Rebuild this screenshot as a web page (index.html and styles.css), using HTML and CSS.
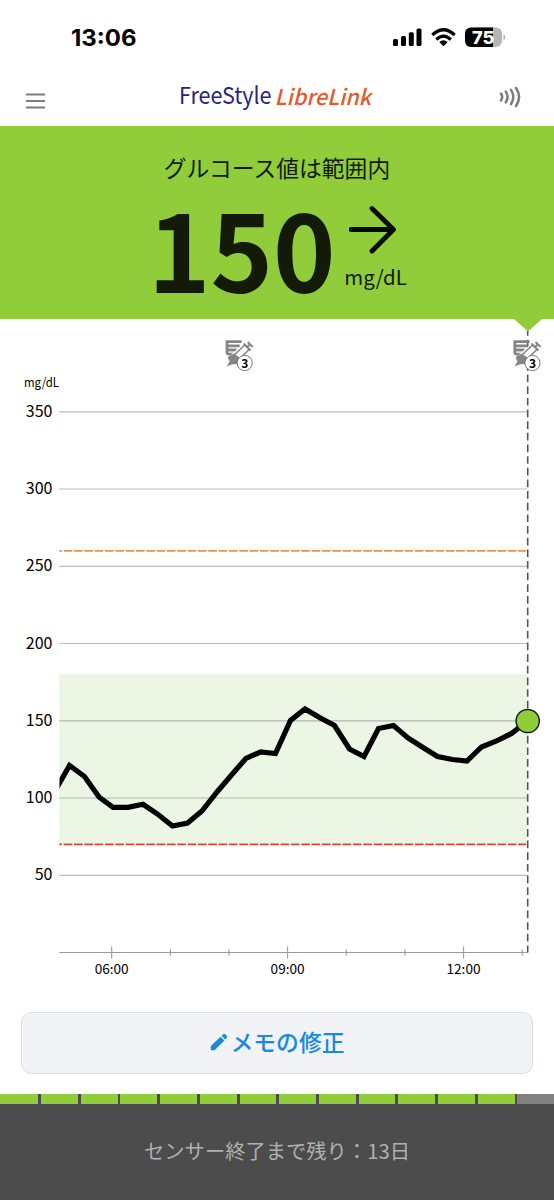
FILE: index.html
```html
<!DOCTYPE html>
<html lang="ja">
<head>
<meta charset="utf-8">
<title>FreeStyle LibreLink</title>
<link rel="stylesheet" href="styles.css">
</head>
<body>
<div class="status">
  <svg width="554" height="68" viewBox="0 0 554 68">
    <text class="clock" x="71" y="46" textLength="65.5" lengthAdjust="spacingAndGlyphs">13:06</text>
    <rect x="393" y="39" width="5" height="7" rx="1.5"/>
    <rect x="401" y="36" width="5" height="10" rx="1.5"/>
    <rect x="408.800" y="32.200" width="5" height="13.800" rx="1.500"/>
    <rect x="416.500" y="28.500" width="5" height="17.500" rx="1.500"/>
    <g class="wifi">
      <path d="M432.300 35Q443.500 24.500 454.700 35"/>
      <path d="M436.200 39.500Q443.500 32.800 450.800 39.500"/>
    </g>
    <path d="M439.300 42Q443.500 38.600 447.700 42L443.500 46.200Z"/>
    <clipPath id="cell"><rect x="465" y="27.500" width="37" height="19.500" rx="6"/></clipPath>
    <g clip-path="url(#cell)">
      <rect class="cell-empty" x="465" y="27" width="37" height="20"/>
      <rect x="465" y="27" width="28" height="20"/>
    </g>
    <path class="cell-empty" d="M503.500 34Q505.300 35 505.300 37.300T503.500 40.600Z"/>
    <text class="battery" x="472" y="43.500" textLength="22.500" lengthAdjust="spacingAndGlyphs">75</text>
  </svg>
</div>
<header class="header">
  <svg width="554" height="58" viewBox="0 68 554 58">
    <path class="menu" d="M26 94.500H45M26 101H45M26 107.500H45"/>
    <text class="logo blue" x="179" y="104.300" textLength="92.500" lengthAdjust="spacingAndGlyphs">FreeStyle</text>
    <text class="logo orange" x="274.500" y="104.500" textLength="96.500" lengthAdjust="spacingAndGlyphs">LibreLink</text>
    <path class="nfc" d="M501 93.500Q503.300 97 501 100.500M505.800 91.600Q509.400 97 505.800 102.400M511 89.800Q515.600 97 511 104.200M516 88Q522.200 97 516 106"/>
  </svg>
</header>
<section class="banner">
  <div class="banner-title">グルコース値は範囲内</div>
  <div class="reading">
    <div class="value">150</div>
    <div class="side">
      <svg class="trend" width="48" height="50" viewBox="0 0 48 50"><path d="M2 24.500H44M23 3.500L44.500 24.500L23 46"/></svg>
      <div class="unit">mg/dL</div>
    </div>
  </div>
</section>
<main>
  <svg class="chart" width="554" height="675" viewBox="0 319 554 675">
    <defs>
      <g id="note">
        <path class="paper" d="M16 1.200H1.300V12.500L2.500 13.700H9M2 5.300H14M2 9.500H11"/>
        <path class="halo" d="M6 19L21 6"/>
        <path class="gray" d="M5 14.500L9 13L15 18L16 24L9 23.500L6 24L1 26L4 21L2 17Z"/>
        <path class="barrel" d="M8.500 14.500L19 4.500L23.500 9L14 18Z"/>
        <path class="plunger" d="M21 7L24.500 3.500M22 1.500L27 6.500M18 3L25 10"/>
        <circle class="badge" cx="19" cy="22.500" r="7.600"/>
        <text class="count" x="19" y="27" text-anchor="middle">3</text>
      </g>
      <clipPath id="plot"><rect x="59.500" y="390" width="480" height="562"/></clipPath>
    </defs>
    <path class="green" d="M514 319H542L528 331.500Z"/>
    <rect class="range" x="59.300" y="674.500" width="468" height="170"/>
    <path class="grid" d="M59.300 411.800H527.500M59.300 489H527.500M59.300 566.300H527.500M59.300 643.500H527.500M59.300 720.800H527.500M59.300 798H527.500M59.300 875.300H527.500"/>
    <path class="axis" d="M59.300 952.500H527.500M111.700 946.500V958.500M287.600 946.500V958.500M463.600 946.500V958.500M170.400 949.500V955.500M229 949.500V955.500M346.300 949.500V955.500M405 949.500V955.500M522.300 949.500V955.500"/>
    <path class="limit high" d="M59.300 550.900H526"/>
    <path class="limit low" d="M59.300 844.400H526"/>
    <path class="now" d="M527.700 331V952.500"/>
    <polyline class="trace" clip-path="url(#plot)" points="55,791 69.500,765.500 84.500,776.500 99,797 113,807.300 128,807.300 143,804.300 157.500,814 172.500,826 187.500,823 202,811 217,792 231.500,775 246,758.300 260.500,752 275.500,753.500 290.500,720.500 305,709 319.500,717.500 334.500,725.500 349.500,749 364,756.500 378.500,728.500 393.500,725.500 408,738 423,747.500 437.500,756.500 452.500,759.500 467,761 481.500,747 496.500,741 511.500,733.500 527.500,721"/>
    <circle class="current" cx="527.700" cy="721" r="11.600"/>
    <g class="ylabels" text-anchor="end">
      <text x="52.500" y="416.700">350</text><text x="52.500" y="494">300</text><text x="52.500" y="571.200">250</text><text x="52.500" y="648.500">200</text><text x="52.500" y="725.700">150</text><text x="52.500" y="803">100</text><text x="52.500" y="880.200">50</text>
    </g>
    <text class="yunit" x="24" y="386.500" textLength="35" lengthAdjust="spacingAndGlyphs">mg/dL</text>
    <g class="xlabels" text-anchor="middle">
      <text x="111.700" y="973.500">06:00</text><text x="287.600" y="973.500">09:00</text><text x="463.500" y="973.500">12:00</text>
    </g>
    <use href="#note" x="225.700" y="340.500"/>
    <use href="#note" x="513.500" y="340.500"/>
  </svg>
  <button class="edit">
    <svg width="18" height="18" viewBox="0 0 18 18"><path d="M.8 17.200V13L10.600 3.700L14.400 7.500L4.600 17.200ZM11.600 2.800L13.300 1.200Q14.200 .5 15.100 1.200L16.700 2.800Q17.400 3.700 16.700 4.700L15.300 6.500Z"/></svg>
    <span>メモの修正</span>
  </button>
</main>
<footer class="footer">
  <div class="days">
    <i></i><i></i><i></i><i></i><i></i><i></i><i></i><i></i><i></i><i></i><i></i><i></i><i></i><i class="used"></i>
  </div>
  <div class="remaining">センサー終了まで残り：13日</div>
</footer>
</body>
</html>
```

FILE: styles.css
```css
body {
  margin: 0;
  width: 554px;
  height: 1200px;
  display: flex;
  flex-direction: column;
  background: #fff;
  color: #111;
  font-family: "Noto Sans CJK JP", sans-serif;
  overflow: hidden;
}
svg { display: block; flex: none; }
.status { height: 68px; }
.clock { font: 700 22.5px Inter, sans-serif; }
.wifi { fill: none; stroke: #000; stroke-width: 3.2; }
.cell-empty { fill: #b5b5b5; }
.battery { font: 800 17.5px Inter, sans-serif; fill: #fff; }
.header { height: 58px; }
.menu { stroke: #7d7d7d; stroke-width: 2.2; }
.logo { font-size: 23.3px; }
.blue { fill: #28257f; }
.orange { fill: #e5592b; font-size: 21.8px; font-style: italic; font-weight: 500; }
.nfc { fill: none; stroke: #7c7c7c; stroke-width: 2.5; stroke-linecap: round; }
.banner {
  height: 193px;
  background: #91cd3b;
  color: #131b08;
  display: flex;
  flex-direction: column;
  align-items: center;
}
.banner-title { padding-top: 26px; font-size: 22.8px; line-height: 32px; font-weight: 400; }
.reading { display: flex; align-items: flex-start; gap: 8.5px; padding-left: 1px; }
.value { padding-top: 18px; font-size: 106px; line-height: 90px; font-weight: 700; }
.side { padding-top: 21px; }
.trend { margin-left: 5px; }
.trend path { fill: none; stroke: #050a00; stroke-width: 4.8; stroke-linecap: round; stroke-linejoin: round; }
.unit { font-size: 20.5px; line-height: 36px; padding-top: 3px; }
.green { fill: #91cd3b; }
.range { fill: #ecf6e4; }
.grid { fill: none; stroke: #777; stroke-opacity: .5; stroke-width: 1.2; }
.axis { fill: none; stroke: #999; stroke-width: 1.1; }
.limit { fill: none; stroke-width: 1.7; stroke-dasharray: 8.7 1.63; stroke-dashoffset: 6; }
.high { stroke: #e49648; }
.low { stroke: #e04438; }
.now { stroke: #555; stroke-width: 1.6; stroke-dasharray: 7.7 3.95; stroke-dashoffset: 3; }
.trace { fill: none; stroke: #000; stroke-width: 5.2; stroke-linejoin: miter; }
.current { fill: #91cd3b; stroke: #122414; stroke-width: 1.5; }
.ylabels { font-size: 16px; }
.yunit { font-size: 12.5px; }
.xlabels { font-size: 13.6px; }
.gray { fill: #858585; }
.paper { fill: none; stroke: #858585; stroke-width: 2.8; }
.halo { fill: none; stroke: #fff; stroke-width: 8; }
.barrel { fill: #fff; stroke: #858585; stroke-width: 1.6; }
.plunger { fill: none; stroke: #858585; stroke-width: 1.9; }
.badge { fill: #fff; stroke: #777; stroke-width: 1; }
.count { font-size: 12px; font-weight: 700; }
.edit {
  box-sizing: border-box;
  width: 512px;
  height: 62px;
  margin: 18px 21px 20px;
  padding: 0 0 3px;
  border: 1.5px solid #dcdee0;
  border-radius: 10px;
  background: #f1f3f6;
  color: #1788e4;
  display: flex;
  align-items: center;
  justify-content: center;
  gap: 3px;
  font: 500 22.8px "Noto Sans CJK JP", sans-serif;
}
.edit svg { fill: #1788e4; }
.footer { height: 106px; background: #4c4c4c; }
.days { display: flex; gap: 2.8px; height: 9.5px; }
.days i { flex: none; width: 36.9px; background: #91cd3b; }
.days i:first-child { width: 38.3px; }
.days .used { width: 40px; background: #828282; }
.remaining { padding-top: 30px; line-height: 32px; font-size: 20.3px; text-align: center; color: #b0b0b0; }
```
